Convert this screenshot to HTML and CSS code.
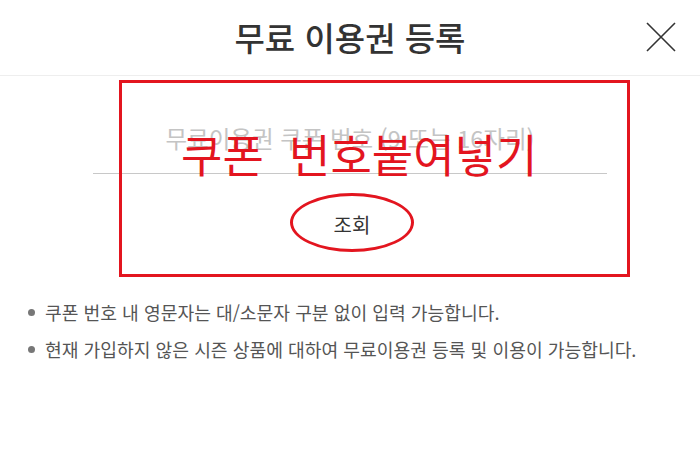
FILE: index.html
```html
<!DOCTYPE html>
<html lang="ko">

<head>
 <meta charset="UTF-8">
 <meta name="viewport" content="width=device-width, initial-scale=1.0">
 <title>무료 이용권 등록</title>
 <link rel="stylesheet" href="styles.css">
</head>

<body>

 <header class="top">
  <span></span>
  <h1 class="top-title">무료 이용권 등록</h1>
  <button class="close" type="button" aria-label="닫기">
   <svg width="32" height="32" viewBox="0 0 32 32">
    <path d="M2 2 L30 30 M30 2 L2 30" stroke="#333" stroke-width="1.6" fill="none" />
   </svg>
  </button>
 </header>

 <main class="coupon">
  <form class="coupon-form">
   <input class="coupon-input" type="text" placeholder="무료이용권 쿠폰 번호 (9 또는 16자리)" autocomplete="off">
   <button class="coupon-btn" type="submit">조회</button>
  </form>

  <ul class="notes">
   <li>쿠폰 번호 내 영문자는 대/소문자 구분 없이 입력 가능합니다.</li>
   <li>현재 가입하지 않은 시즌 상품에 대하여 무료이용권 등록 및 이용이 가능합니다.</li>
  </ul>

  <!-- 빨간 표시 -->
  <div class="mark-box"></div>
  <div class="mark-text">쿠폰&nbsp;&nbsp;번호붙여넣기</div>
  <div class="mark-ring"></div>
 </main>

</body>

</html>
```

FILE: styles.css
```css
*,
*::before,
*::after {
 box-sizing: border-box;
}

body {
 margin: 0;
 background: #fff;
 font-family: "Noto Sans CJK KR", "Noto Sans", sans-serif;
 color: #333;
}

.top {
 display: grid;
 grid-template-columns: 1fr auto 1fr;
 align-items: center;
 height: 76px;
 border-bottom: 1px solid #eee;
}

.top-title {
 margin: 0;
 font-size: 33px;
 font-weight: 500;
 letter-spacing: 0;
 color: #333;
 padding-bottom: 2px;
}

.close {
 justify-self: end;
 margin-right: 23px;
 margin-bottom: 1px;
 padding: 0;
 border: 0;
 background: none;
 width: 32px;
 height: 32px;
}

.close svg {
 display: block;
}

.coupon {
 position: relative;
 padding-top: 42px;
}

.coupon-form {
 display: flex;
 flex-direction: column;
 align-items: center;
}

.coupon-input {
 width: 514px;
 height: 56px;
 padding: 0 0 15px;
 border: 0;
 border-bottom: 1px solid #c8c8c8;
 font-family: inherit;
 font-size: 23.5px;
 text-align: center;
 letter-spacing: 0;
 outline: 0;
}

.coupon-input::placeholder {
 color: #c4c4c4;
}

.coupon-btn {
 margin-top: 19px;
 margin-left: 4px;
 width: 122px;
 height: 58px;
 padding-top: 5px;
 border: 1px solid #e6e6e6;
 border-radius: 50%;
 background: #fff;
 font-family: inherit;
 font-size: 20px;
 color: #333;
}

.notes {
 margin: 42px 0 0;
 padding: 0 0 0 45px;
 list-style: none;
 font-size: 18.2px;
 letter-spacing: 0;
 color: #555;
}

.notes li {
 position: relative;
 line-height: 38px;
}

.notes li:last-child {
 margin-top: -1px;
}

.notes li::before {
 content: "";
 position: absolute;
 left: -17px;
 top: 16px;
 width: 7px;
 height: 7px;
 border-radius: 50%;
 background: #777;
}

.mark-box {
 position: absolute;
 left: 119px;
 top: 4px;
 width: 511px;
 height: 197px;
 border: 3px solid #e3151f;
}

.mark-text {
 position: absolute;
 left: 181px;
 top: 55px;
 font-size: 45px;
 line-height: 1;
 color: #e3151f;
 white-space: nowrap;
}

.mark-ring {
 position: absolute;
 left: 290px;
 top: 117px;
 width: 124px;
 height: 59px;
 border: 3px solid #e3151f;
 border-radius: 50%;
}
```
